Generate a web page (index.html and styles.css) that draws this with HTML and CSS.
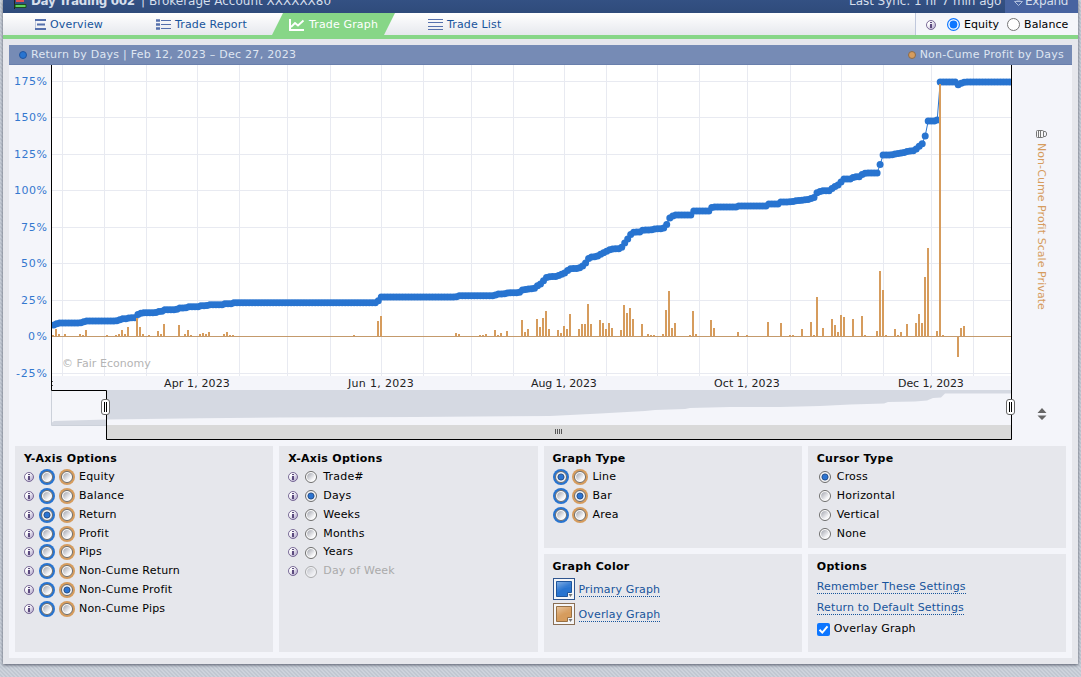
FILE: index.html
```
<!DOCTYPE html>
<html lang="en">
<head>
<meta charset="utf-8">
<title>Trade Graph</title>
<link rel="stylesheet" href="styles.css">
</head>
<body>
<svg width="0" height="0" class="defs" aria-hidden="true">
  <defs>
    <linearGradient id="radioFill" x1="0" y1="0" x2="1" y2="1"><stop offset=".2" stop-color="#b9bbc2"/><stop offset=".75" stop-color="#f6f6f8"/></linearGradient>
    <linearGradient id="infoFill" x1="0" y1="0" x2="1" y2="1"><stop offset=".3" stop-color="#fff"/><stop offset="1" stop-color="#a79bc4"/></linearGradient>
    <linearGradient id="shine" x1="0" y1="0" x2=".6" y2="1"><stop offset="0" stop-color="#fff" stop-opacity=".4"/><stop offset=".6" stop-color="#fff" stop-opacity=".05"/></linearGradient>
    <symbol id="info" viewBox="0 0 10 10"><circle cx="5" cy="5" r="4.500" fill="url(#infoFill)" stroke="#6c5b8c" stroke-width=".9"/><path d="M4 2h2v1H4zM4 4h2v4H4z" fill="#5b4a7e"/></symbol>
    <symbol id="radio" viewBox="0 0 12 12"><circle cx="6" cy="6" r="5.500" fill="#fff" stroke="#6c6c6c" stroke-width="1"/><circle cx="6" cy="6" r="3.900" fill="url(#radioFill)"/></symbol>
    <symbol id="radio-on" viewBox="0 0 12 12"><circle cx="6" cy="6" r="5.500" fill="#f4f4f6" stroke="#6c6c6c" stroke-width="1"/><circle cx="6" cy="6" r="3.100" fill="#2b74d2" stroke="#244a80" stroke-width=".9"/></symbol>
  </defs>
</svg>
<div class="window">
  <header class="top">
    <svg class="logo" width="14" height="18"><path d="M1.500 0v17" stroke="#222"/><path d="M3 5h8v5H3z" fill="#e55050"/><path d="M2 12.500h11v3H2z" fill="#5fd35f" stroke="#1d4d1d"/></svg>
    <b class="account">Day Trading 002</b><span class="bar">|</span><span class="broker">Brokerage Account XXXXXX80</span>
    <span class="sync">Last Sync: 1 hr 7 min ago</span>
    <span class="expand"><svg width="9" height="12"><path d="M2.500 0v5h4V0M0.500 6.500h8L4.500 10.500z" fill="none" stroke="#aebddb"/></svg>Expand</span>
  </header>
  <nav class="tabs">
    <a class="tab t1"><svg width="11" height="11"><path d="M0 1h11M2 5.500h8M0 10h11" stroke="#5570ac" stroke-width="1.800"/><path d="M.5 1v9" stroke="#5570ac" stroke-opacity=".35"/></svg>Overview</a>
    <a class="tab t2"><svg width="15" height="11"><path d="M0 1.500h4M0 5.500h4M0 9.500h4" stroke="#5570ac" stroke-width="2.600"/><path d="M5 1.500h10M5 5.500h10M5 9.500h10" stroke="#5570ac"/></svg>Trade Report</a>
    <a class="tab t3"><svg width="16" height="12"><path d="M1 0v11h14" fill="none" stroke="#fff" stroke-width="2"/><path d="M2 8l4-4 3 2.500L14.500 1.500" fill="none" stroke="#fff" stroke-width="1.800"/></svg>Trade Graph</a>
    <a class="tab t4"><svg width="15" height="11"><path d="M0 .5h15M0 3.500h15M0 7.500h15M0 10.500h15" stroke="#5570ac"/></svg>Trade List</a>
    <div class="mode"><svg class="i" width="10" height="10"><use href="#info"/></svg>
      <label><svg width="13" height="13"><circle cx="6.500" cy="6.500" r="5.900" fill="#fff" stroke="#0d76ff" stroke-width="1.200"/><circle cx="6.500" cy="6.500" r="3.900" fill="#0d76ff"/></svg>Equity</label>
      <label><svg width="13" height="13"><circle cx="6.500" cy="6.500" r="6" fill="#fff" stroke="#767676"/></svg>Balance</label></div>
  </nav>
  <main class="panel">
    <div class="legend"><span><i class="dot blue"></i>Return by Days | Feb 12, 2023 – Dec 27, 2023</span><span><i class="dot tan"></i>Non-Cume Profit by Days</span></div>
    <svg class="chart" id="chart" width="1063" height="375" viewBox="9 65 1063 375">
      <rect x="52" y="65" width="960" height="311" fill="#fff"/>
      <g id="grid"></g>
      <text class="mark" x="62" y="367" textLength="89">© Fair Economy</text>
      <g id="labels"></g>
      <clipPath id="plot"><rect x="52" y="65" width="959" height="326"/></clipPath>
      <g id="series" clip-path="url(#plot)"></g>
      <rect x="52" y="391" width="55" height="34" fill="#f5f6fa"/>
      <path d="M52 425.500v-3l2-1.500L107 419.500v6z" fill="#d5d9e2"/>
      <path d="M51.500 391v34.500H107" fill="none" stroke="#ccd1da"/>
      <path d="M107 390H1011V393.500H945L941 397.500 933 398 927 400.500 915 401.500 888 402 884 403.500 850 404.500 820 406 780 407 730 407 690 408 685 409 655 410 645 411 600 413.500 550 416 415 417 280 417.500 200 418.300 107 419.500z" fill="#d5d9e2"/>
      <rect x="107" y="425" width="904" height="14" fill="#d9d9d9"/>
      <path d="M51.500 65V390.500H106.500V439.500H1011.500V65" fill="none" stroke="#000"/>
      <path d="M555.500 429v5M557.500 429v5M559.500 429v5M561.500 429v5" stroke="#555"/>
      <g id="handles" fill="#fff" stroke="#666"><rect x="101.500" y="399.500" width="8" height="15" rx="2.500"/><rect x="1006.500" y="399.500" width="8" height="15" rx="2.500"/><path d="M104.500 402v10M106.500 402v10M1009.500 402v10M1011.500 402v10" stroke="#000"/></g>
      <path d="M1037.500 413l4.500-5 4.500 5zM1037.500 415.500h9l-4.500 4.500z" fill="#666"/>
      <g fill="#f7f7f7" stroke="#777"><rect x="1036.500" y="130.500" width="7" height="7" rx="1"/><path d="M1038.500 131v6M1040.500 131v6M1043.500 131.500h2l1 1.500v2l-1 1.500h-2" fill="none"/></g>
      <text class="side" transform="translate(1038 143) rotate(90)" textLength="167">Non-Cume Profit Scale Private</text>
    </svg>
    <section class="options" id="options">
      <div class="box tall" id="yaxis"><h2>Y-Axis Options</h2></div>
      <div class="box tall" id="xaxis"><h2>X-Axis Options</h2></div>
      <div class="box" id="gtype"><h2>Graph Type</h2></div>
      <div class="box" id="cursor"><h2>Cursor Type</h2></div>
      <div class="box"><h2>Graph Color</h2>
        <div class="swatch"><svg width="22" height="22"><rect x=".5" y=".5" width="21" height="21" fill="#f5f6f8" stroke="#2f558f"/><path d="M3.500 3.500h15v11h-4v4h-11z" fill="#2874d0" stroke="#1f559b"/><path d="M4 4h14v5Q10 9 4 15z" fill="url(#shine)"/><path d="M15.500 16h4l-2 3z" fill="#777"/></svg><a>Primary Graph</a></div>
        <div class="swatch"><svg width="22" height="22"><rect x=".5" y=".5" width="21" height="21" fill="#f5f6f8" stroke="#8a6f55"/><path d="M3.500 3.500h15v11h-4v4h-11z" fill="#d69c5d" stroke="#987044"/><path d="M4 4h14v5Q10 9 4 15z" fill="url(#shine)"/><path d="M15.500 16h4l-2 3z" fill="#777"/></svg><a>Overlay Graph</a></div>
      </div>
      <div class="box links"><h2>Options</h2>
        <div class="link"><a>Remember These Settings</a></div>
        <div class="link"><a>Return to Default Settings</a></div>
        <label class="check"><svg width="13" height="13"><rect width="13" height="13" rx="2" fill="#0d76ff"/><path d="M2.500 6.800l2.800 2.800L10.500 3.300" fill="none" stroke="#fff" stroke-width="2"/></svg>Overlay Graph</label>
      </div>
    </section>
  </main>
</div>
<script src="app.js"></script>
</body>
</html>
```
FILE: styles.css
```
* { box-sizing: border-box; }
body {
  margin: 0; height: 677px; overflow: hidden; color: #000;
  font: 11px/14px Verdana, "DejaVu Sans", sans-serif; letter-spacing: 0.15px;
  background: repeating-linear-gradient(45deg, #cdd3dc 0 1.414px, #c0c7d1 1.414px 2.828px);
}
svg { display: block; flex: none; }
.defs { position: absolute; }
.window { margin: 0 3px; height: 664px; overflow: hidden; background: #e6e7ec; box-shadow: 0 1px 3px #555b6a; width: 1075px; }
.top { display: flex; align-items: center; height: 27px; margin-top: -14px; padding-top: 2px; background: linear-gradient(#38578c, #2f4b7b); color: #d6dfec; font-size: 12px; letter-spacing: 0; white-space: pre; padding-left: 10px; }
.logo { margin: 0 4px 0 0; }
.account { width: 109px; letter-spacing: -.4px; }
.bar { width: 8px; }
.broker { letter-spacing: 0; }
.account { width: 110px; }
.sync { margin-left: auto; width: 156px; letter-spacing: -.05px; }
.expand { display: flex; align-items: center; gap: 2px; height: 27px; margin-top: -2px; padding-top: 2px; background: #4763a0; width: 73px; padding-left: 9px; letter-spacing: -.3px; }
.tabs { display: flex; align-items: stretch; height: 26px; border-bottom: 4px solid #87d687; background: linear-gradient(#fff, #e6e8ed 22px); color: #17549b; }
.tab { display: flex; align-items: center; gap: 4px; padding-top: 1px; }
.t1 { width: 121px; margin-left: 32px; }
.t2 { width: 116px; }
.t3 { background: #87d687; color: #fff; clip-path: polygon(11px 0, 100% 0, calc(100% - 11px) 100%, 0 100%); width: 123px; padding-left: 17px; }
.t4 { margin-left: 33px; }
.mode { margin-left: auto; width: 163px; border-left: 1px solid #c0c8dc; background: #f5f6fa; display: flex; align-items: center; color: #000; padding: 1px 0 0 10px; letter-spacing: .05px; }
.mode label { display: flex; align-items: center; gap: 4px; margin-left: 11px; }
.mode label + label { margin-left: 8px; }
.mode .i { margin-top: 1px; }
.panel { margin: 6px; height: 613px; background: #f4f5fa; width: 1063px; }
.legend { height: 20px; background: #768bb5; border-bottom: 1px solid #697fac; color: #dfe6f2; display: flex; justify-content: space-between; align-items: center; padding: 1px 8px 0 10px; white-space: pre; letter-spacing: .27px; }
.legend span { display: flex; align-items: center; gap: 4px; }
.dot { width: 8px; height: 8px; border-radius: 50%; border: 1px solid #2155a0; }
.dot.blue { background: #2874d0; }
.dot.tan { background: #d69c5d; border-color: #8b6b4a; }
.chart text { font: 11px "DejaVu Sans", sans-serif; }
.chart .ylab { fill: #3478cf; }
.xlab { fill: #222; text-anchor: middle; }
.chart .mark { fill: #b4b4b4; }
.chart .side { fill: #d69c5d; }
.options { display: grid; grid-template-columns: repeat(4, 1fr); grid-template-rows: 102px 98px; gap: 6px; padding: 6px 6px 0; }
.box { background: #e6e7ec; padding: 5px 9px; }
.tall { grid-row: span 2; }
h2 { margin: 0; font-size: 11px; line-height: 14px; letter-spacing: .3px; padding-top: 1px; }
.row { display: flex; align-items: center; height: 18.860px; white-space: pre; letter-spacing: .2px; padding-top: 1px; }
h2 + .row { margin-top: 1px; }
.row svg { margin-top: 1px; }
.row svg.i { margin: 0 5px 0 0; }
.row .ring { width: 16px; height: 16px; border-radius: 50%; display: flex; align-items: center; justify-content: center; background: #2874d0; margin: 0 4px 0 0; }
.row .ring svg { margin: 0; }
.row .ring.tan { background: #d69c5d; margin-right: 4px; }
#xaxis .row svg.i { margin-right: 7px; }
#xaxis .radio { margin-right: 6px; }
#cursor .radio { margin: 1px 6px 0 2px; }
#gtype .ring { margin-right: 3px; }
#gtype .tan { margin-right: 5px; }
.off .radio { opacity: .5; }
.off { color: #aaa; }
.swatch { display: flex; align-items: center; gap: 4px; height: 22px; margin-top: 4px; }
.swatch a { margin-top: 1px; }
.swatch + .swatch { margin-top: 3px; }
.box a { color: #17549b; border-bottom: 1px dotted #17549b; line-height: 13px; display: inline-block; }
.link { height: 21px; padding-top: 6px; }
.check { display: flex; align-items: center; gap: 4px; margin-top: 6px; }
```
FILE: app.js
```
const BLUE = '#2874d0', TAN = '#d69c5d';
const el = id => document.getElementById(id);

// Grid and axis labels
const gx = [62,104,146,197,239,287,330,381,423,471,513,564,606,657,699,747,790,841,883,931,973];
const gy = [81,117,154,190,227,263,300,336,373];
const ylabWidths = [33,33,33,33,26,26,26,19,31];
let g = '';
gx.forEach(x => g += `<path d="M${x}.5 65V376" stroke="#e8eaf1"/>`);
gy.forEach(y => g += `<path d="M52 ${y}.5H1011" stroke="#e8eaf1"/>`);
el('grid').innerHTML = g;
let labels = '';
gy.forEach((y, i) => labels += `<text class="ylab" x="${47 - ylabWidths[i]}" textLength="${ylabWidths[i]}" y="${y + 4}">${175 - 25 * i}%</text>`);
[[197,'Apr 1, 2023'],[381,'Jun 1, 2023'],[564,'Aug 1, 2023'],[747,'Oct 1, 2023'],[931,'Dec 1, 2023']]
  .forEach(([x, t]) => labels += `<text class="xlab" x="${x}" y="387" textLength="66">${t}</text>`);
labels += '<path d="M52.500 381v1M52.500 385v1" stroke="#555"/>';
el('labels').innerHTML = labels;

// Cumulative return, interpolated to one marker per day
const line = [[53,325.5],[56,324],[59,323],[80,323],[83,322],[86,321],[116,321],[119,320],[123,318.7],[127,318.7],[130,317.8],[135,317.8],[137,315],[140,313.5],[143,312.8],[155,312.8],[158,311.5],[162,311.3],[164,309.8],[176,309.8],[179,308],[187,307.8],[189,306.8],[198,306.7],[201,305.8],[207,305.6],[210,304.7],[222,304.7],[225,303.8],[231,303.7],[234,302.8],[376,302.8],[379,300],[381,297],[456,297],[459,295.8],[494,295.8],[497,294],[505,293.8],[508,292.8],[519,292.8],[522,290],[527,289.5],[530,288.8],[534,288.8],[537,286],[540,284.5],[543,281.5],[546,277.5],[549,276.7],[556,276.5],[560,274.8],[564,273.5],[567,271],[570,268.7],[578,268.5],[582,266.5],[585,264],[588,259],[591,257],[597,256.5],[600,254.5],[604,252.5],[610,249.5],[613,248.8],[620,248.8],[622,247],[625,242.5],[628,238.5],[631,234],[634,232],[640,232],[643,230],[652,229.8],[655,228.8],[663,228.8],[666.5,225],[669.5,218],[673,216],[676,215],[691,215],[693.5,211],[709,211],[711.5,207.5],[715,206.9],[736,206.9],[739,206],[766,206],[768.5,204],[778,204],[781,202],[792,201.8],[795,200.8],[801,200.5],[804,199.8],[810,199.5],[812,197.5],[815,197.5],[817.3,192],[820,191.5],[823,190.7],[830,190.7],[833,187.5],[838,185],[841,182],[844,179],[851,179],[854,176.8],[860,176.8],[863,173.5],[866,173],[878,173],[880.5,163],[883,155],[893,154.8],[896,153.8],[899,153.5],[902,152.7],[905,152.5],[908,151],[914,150.8],[917,148.5],[919.5,146],[922.5,143.5],[925.5,135],[928,121],[935,121],[937.3,120],[940,82],[956,82],[958.5,85],[961.5,83],[965,82],[1013,82]];
const at = x => {
  const i = Math.max(1, line.findIndex(p => p[0] >= x));
  const [a, b] = [line[i - 1], line[i]];
  return a[1] + (b[1] - a[1]) * (x - a[0]) / (b[0] - a[0]);
};
const points = [];
for (let k = -24; k <= 295; k++) {
  const x = 940.2 - 3.005 * k;
  if (x > 53 && x < 1013) points.push([x, at(x)]);
}
let s = `<polyline fill="none" stroke="${BLUE}" points="${points.map(p => p.join()).join(' ')}"/>`;
points.forEach(([x, y]) => s += `<circle cx="${x.toFixed(1)}" cy="${y.toFixed(1)}" r="3.5" fill="${BLUE}"/>`);

// Daily profit: x, bar height
const bars = [53,1,56,7,59,2,65,2,80,2,83,1,86,6,107,1,116,1,119,2,122,6,125,2,128,9,137,18,140,9,143,2,149,1,158,5,161,2,164,12,179,11,185,2,188,6,191,1,200,2,203,3,206,2,209,4,224,2,227,4,230,1,233,1,354,1,378,15,381,20,456,3,459,2,480,1,483,1,486,2,495,6,498,1,501,3,507,5,522,16,525,4,528,7,537,17,540,9,543,18,546,25,549,7,558,6,561,3,564,10,567,7,570,22,579,7,582,12,585,12,588,32,591,12,600,16,603,13,606,7,609,13,612,8,621,6,624,31,627,23,630,28,633,17,642,12,648,2,651,1,654,1,663,2,666,26,669,45,672,8,675,13,690,1,693,25,696,2,711,16,714,8,738,4,747,1,768,14,781,13,790,1,793,1,802,7,811,14,814,1,817,39,823,8,832,17,835,11,838,4,841,21,844,19,853,17,862,20,865,1,877,5,880,65,883,46,886,1,895,7,898,1,901,4,907,12,916,13,919,22,922,13,925,59,928,88,937,5,940,252,943,1,958,-20,961,8,964,10];
s += '<path d="M52 336.500H1011" stroke="#c49a6c"/>';
for (let i = 0; i < bars.length; i += 2) {
  const h = bars[i + 1];
  s += `<rect x="${bars[i] - 1}" y="${h > 0 ? 336 - h : 337}" width="2" height="${Math.abs(h)}" fill="${TAN}"/>`;
}
el('series').innerHTML = s;

// Option rows
const icon = (id, n, cls) => `<svg class="${cls}" width="${n}" height="${n}"><use href="#${id}"/></svg>`;
const radio = on => icon(on ? 'radio-on' : 'radio', 12, 'radio');
const ring = (color, on) => `<span class="ring ${color}">${radio(on)}</span>`;
const add = (id, html) => el(id).insertAdjacentHTML('beforeend', html);
['Equity','Balance','Return','Profit','Pips','Non-Cume Return','Non-Cume Profit','Non-Cume Pips'].forEach((t, i) =>
  add('yaxis', `<div class="row">${icon('info', 10, 'i')}${ring('', i === 2)}${ring('tan', i === 6)}${t}</div>`));
['Trade#','Days','Weeks','Months','Years','Day of Week'].forEach((t, i) =>
  add('xaxis', `<div class="row${i === 5 ? ' off' : ''}">${icon('info', 10, 'i')}${radio(i === 1)}${t}</div>`));
['Line','Bar','Area'].forEach((t, i) =>
  add('gtype', `<div class="row">${ring('', i === 0)}${ring('tan', i === 1)}${t}</div>`));
['Cross','Horizontal','Vertical','None'].forEach((t, i) =>
  add('cursor', `<div class="row">${radio(i === 0)}${t}</div>`));
```
